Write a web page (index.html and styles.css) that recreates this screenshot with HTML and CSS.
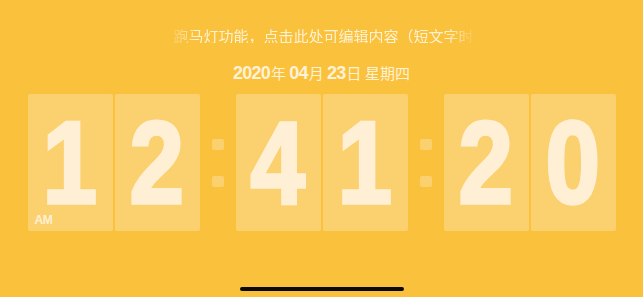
FILE: index.html
```html
<!DOCTYPE html>
<html lang="zh">
<head>
<meta charset="utf-8">
<link rel="stylesheet" href="styles.css">
</head>
<body>
<div class="screen">
  <div class="marquee"><span class="marquee-text">跑马灯功能，点击此处可编辑内容（短文字时</span></div>
  <div class="date"><b>2020</b>年 <b>04</b>月 <b>23</b>日 星期四</div>
  <div class="clock">
    <div class="pair">
      <div class="card"><span class="digit">1</span><span class="ampm">AM</span></div>
      <div class="card"><span class="digit">2</span></div>
    </div>
    <div class="colon"><i></i><i></i></div>
    <div class="pair">
      <div class="card"><span class="digit">4</span></div>
      <div class="card"><span class="digit">1</span></div>
    </div>
    <div class="colon"><i></i><i></i></div>
    <div class="pair">
      <div class="card"><span class="digit">2</span></div>
      <div class="card"><span class="digit">0</span></div>
    </div>
  </div>
  <div class="home-bar"></div>
</div>
</body>
</html>
```
FILE: styles.css
```css
html, body {
  margin: 0;
  padding: 0;
  background: #fac13d;
}
.screen {
  width: 643px;
  height: 297px;
  display: flex;
  flex-direction: column;
  align-items: center;
  overflow: hidden;
  font-family: "Noto Sans CJK SC", sans-serif;
}
.marquee {
  margin-top: 23px;
  width: 310px;
  height: 20px;
  overflow: hidden;
  white-space: nowrap;
  -webkit-mask-image: linear-gradient(to right, transparent 0, #000 30px, #000 280px, transparent 310px);
  mask-image: linear-gradient(to right, transparent 0, #000 30px, #000 280px, transparent 310px);
}
.marquee-text {
  display: inline-block;
  padding-left: 7px;
  font-size: 15px;
  line-height: 20px;
  color: rgba(255, 246, 225, 0.9);
}
.date {
  margin-top: 19px;
  height: 22px;
  line-height: 22px;
  font-size: 15px;
  color: #fff2d6;
  white-space: nowrap;
}
.date b {
  font-family: "Liberation Sans", sans-serif;
  font-weight: bold;
  font-size: 18px;
  letter-spacing: -0.8px;
  margin-right: 1px;
}
.clock {
  margin-top: 10px;
  display: flex;
  gap: 12px;
  align-items: center;
}
.pair {
  display: flex;
  gap: 2px;
}
.card {
  position: relative;
  width: 85px;
  height: 137px;
  border-radius: 2px;
  background: #fbd06f;
  display: flex;
  align-items: center;
  justify-content: center;
}
.digit {
  font-family: "Liberation Sans", sans-serif;
  font-weight: bold;
  font-size: 100px;
  line-height: 0.75;
  color: #fff0d5;
  -webkit-text-stroke: 3px #fff0d5;
  transform: scale(0.98, 1.16);
}
.ampm {
  position: absolute;
  left: 7px;
  bottom: 5px;
  font-family: "Liberation Sans", sans-serif;
  font-weight: bold;
  font-size: 12px;
  line-height: 12px;
  letter-spacing: -0.5px;
  color: #fff0d5;
}
.colon {
  display: flex;
  flex-direction: column;
  gap: 26px;
}
.colon i {
  display: block;
  width: 12px;
  height: 11px;
  border-radius: 2px;
  background: #fbd06f;
}
.home-bar {
  margin-top: auto;
  margin-bottom: 6px;
  width: 164px;
  height: 4px;
  border-radius: 2px;
  background: #0a0a0a;
}
```
